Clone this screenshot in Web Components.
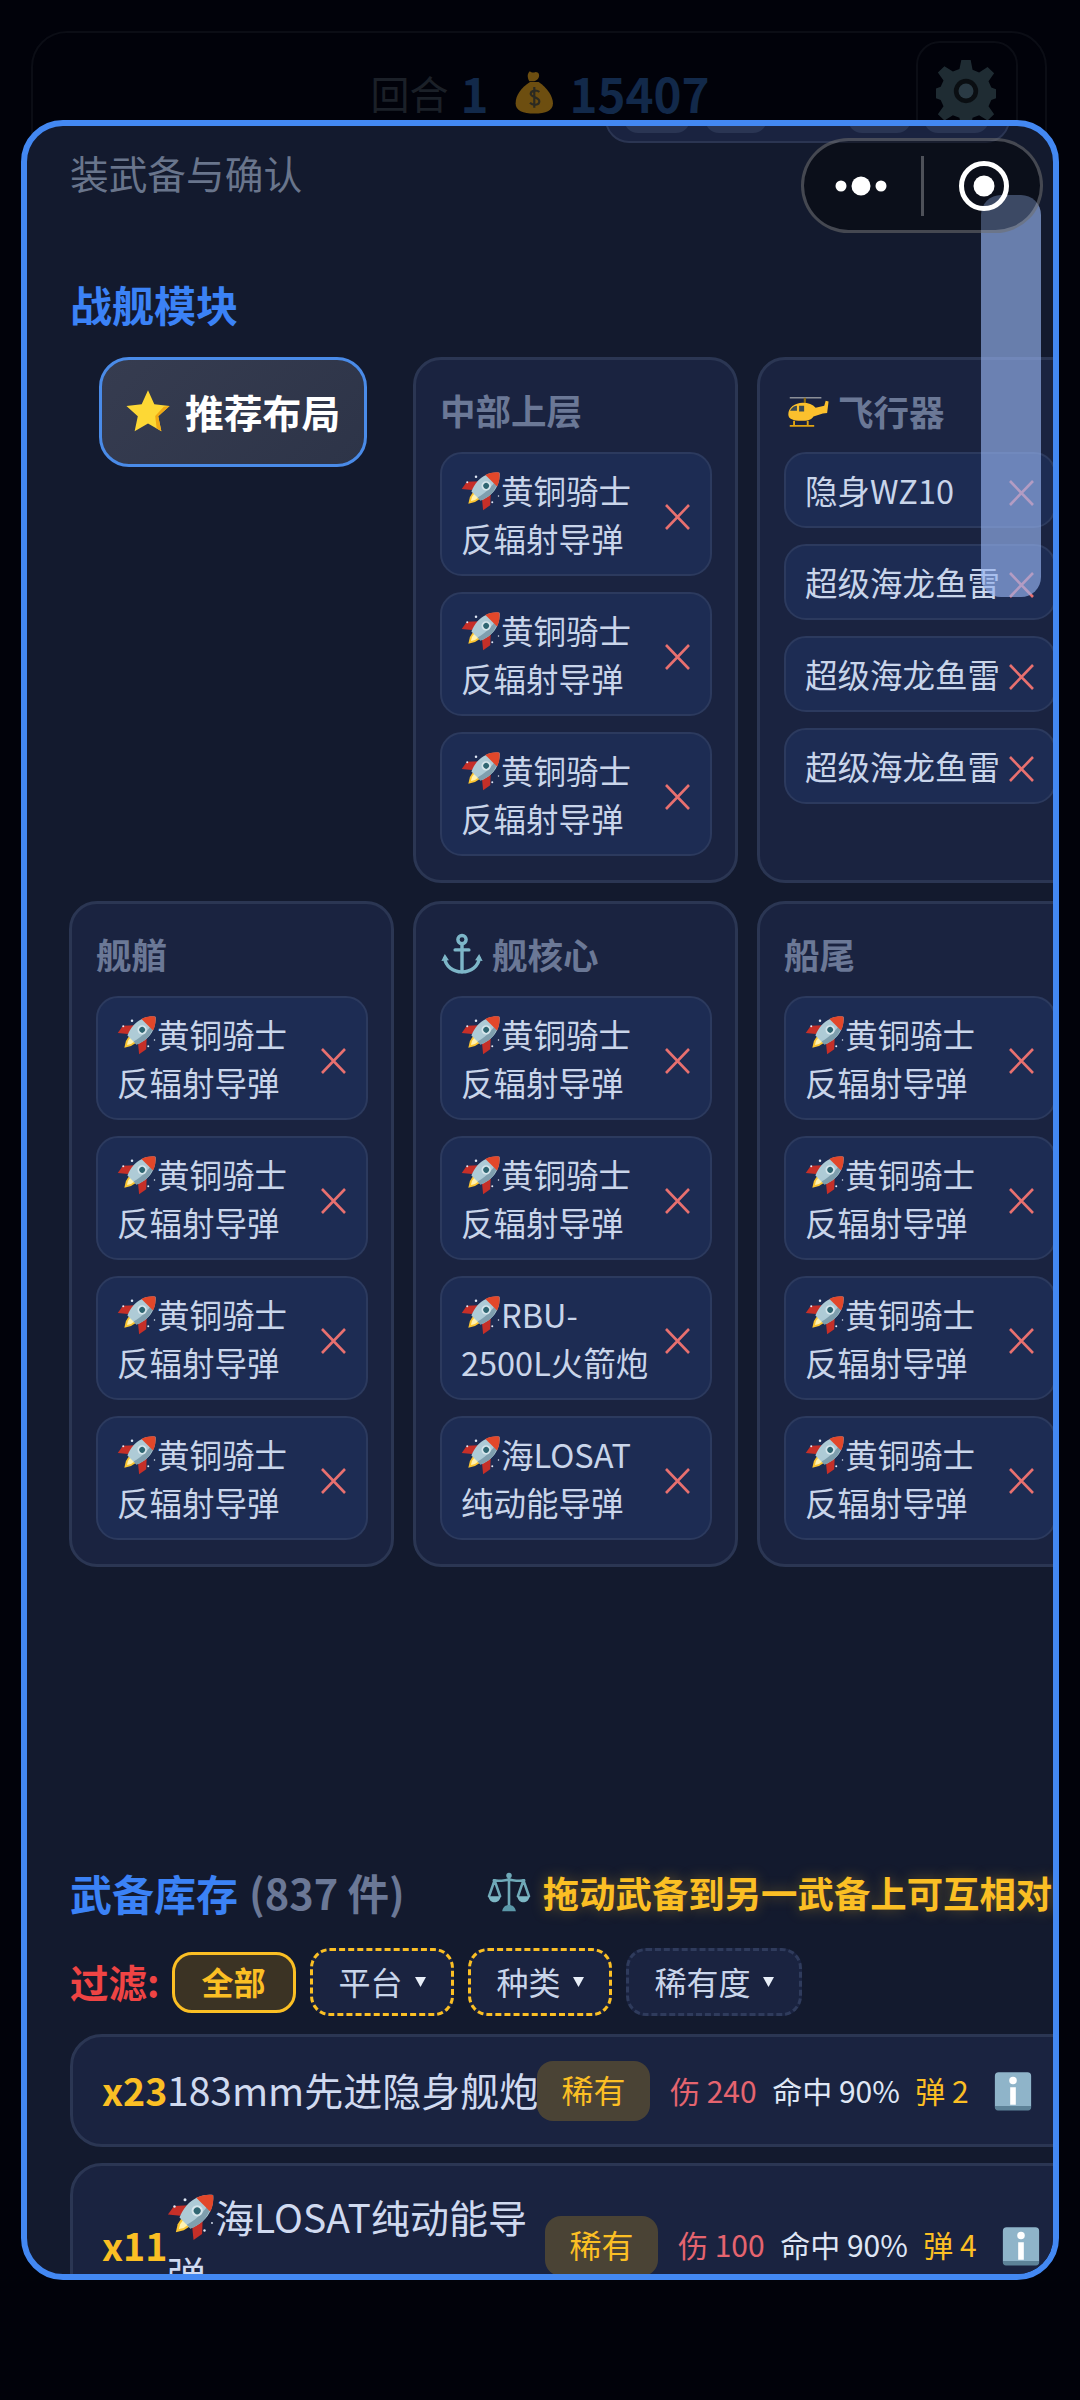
<!DOCTYPE html>
<html lang="zh-CN">
<head>
<meta charset="UTF-8">
<title>装武备与确认</title>
<style>
  html, body { margin: 0; background: #01020a; }
  body {
    width: 1080px; height: 2400px; position: relative; overflow: hidden;
    font-family: "Noto Sans CJK SC", "Noto Sans", sans-serif;
  }
</style>
</head>
<body>
<hud-bar></hud-bar>

<loadout-modal>
  <panel-title>装武备与确认</panel-title>
  <section-head>战舰模块</section-head>

  <module-grid>
    <layout-button><game-icon name="star" size="46" style="margin-right:14px"></game-icon>推荐布局</layout-button>

    <module-col><span slot="head">中部上层</span>
      <weapon-chip><game-icon name="rocket"></game-icon>黄铜骑士反辐射导弹</weapon-chip>
      <weapon-chip><game-icon name="rocket"></game-icon>黄铜骑士反辐射导弹</weapon-chip>
      <weapon-chip><game-icon name="rocket"></game-icon>黄铜骑士反辐射导弹</weapon-chip>
    </module-col>

    <module-col><span slot="head"><game-icon name="heli" size="46"></game-icon> 飞行器</span>
      <weapon-chip>隐身WZ10</weapon-chip>
      <weapon-chip>超级海龙鱼雷</weapon-chip>
      <weapon-chip>超级海龙鱼雷</weapon-chip>
      <weapon-chip>超级海龙鱼雷</weapon-chip>
    </module-col>

    <module-col><span slot="head">舰艏</span>
      <weapon-chip><game-icon name="rocket"></game-icon>黄铜骑士反辐射导弹</weapon-chip>
      <weapon-chip><game-icon name="rocket"></game-icon>黄铜骑士反辐射导弹</weapon-chip>
      <weapon-chip><game-icon name="rocket"></game-icon>黄铜骑士反辐射导弹</weapon-chip>
      <weapon-chip><game-icon name="rocket"></game-icon>黄铜骑士反辐射导弹</weapon-chip>
    </module-col>

    <module-col><span slot="head"><game-icon name="anchor" size="44"></game-icon> 舰核心</span>
      <weapon-chip><game-icon name="rocket"></game-icon>黄铜骑士反辐射导弹</weapon-chip>
      <weapon-chip><game-icon name="rocket"></game-icon>黄铜骑士反辐射导弹</weapon-chip>
      <weapon-chip><game-icon name="rocket"></game-icon>RBU-2500L火箭炮</weapon-chip>
      <weapon-chip><game-icon name="rocket"></game-icon>海LOSAT纯动能导弹</weapon-chip>
    </module-col>

    <module-col><span slot="head">船尾</span>
      <weapon-chip><game-icon name="rocket"></game-icon>黄铜骑士反辐射导弹</weapon-chip>
      <weapon-chip><game-icon name="rocket"></game-icon>黄铜骑士反辐射导弹</weapon-chip>
      <weapon-chip><game-icon name="rocket"></game-icon>黄铜骑士反辐射导弹</weapon-chip>
      <weapon-chip><game-icon name="rocket"></game-icon>黄铜骑士反辐射导弹</weapon-chip>
    </module-col>
  </module-grid>

  <stock-head count="(837 件)">
    <game-icon name="scale" size="44"></game-icon>
    <span>拖动武备到另一武备上可互相对比</span>
  </stock-head>

  <filter-bar>
    <filter-chip kind="active">全部</filter-chip>
    <filter-chip kind="gold" menu>平台</filter-chip>
    <filter-chip kind="gold" menu>种类</filter-chip>
    <filter-chip kind="plain" menu>稀有度</filter-chip>
  </filter-bar>

  <stock-row count="x23" width="370" nowrap dmg="240" ammo="2">183mm先进隐身舰炮</stock-row>
  <stock-row count="x11" width="378" dmg="100" ammo="4"><game-icon name="rocket" size="48"></game-icon>海LOSAT纯动能导弹</stock-row>
</loadout-modal>

<wx-capsule></wx-capsule>

<script>
  const ICONS = {
    rocket: `<g transform="translate(37 27) scale(1.15) rotate(45) translate(-32 -32)">
        <path d="M21 30 9 43l2 12 11-9z" fill="#c62f28"/>
        <path d="M43 30l12 13-2 12-11-9z" fill="#c62f28"/>
        <path d="M25 46h14l-2 9-5 8-5-8z" fill="#fbc531"/>
        <path d="M28 47h8l-1 6-3 5-3-5z" fill="#fff2b0"/>
        <path d="M32 2c9 7 14 19 13 30-.3 6-2 11-4 16H23c-2-5-3.700-10-4-16-1-11 4-23 13-30z" fill="#aecbd6"/>
        <path d="M32 2c2 0 13 16 13 30-.3 6-2 11-4 16h-6c4-14 4-32-3-46z" fill="#7f9fae"/>
        <path d="M32 2c5.500 4 9.500 10 11.500 16h-23C22.500 12 26.500 6 32 2z" fill="#e2472a"/>
        <circle cx="32" cy="28" r="6.500" fill="#d6e6ec"/><circle cx="32" cy="28" r="4" fill="#2f6672"/>
      </g>
      <circle cx="10" cy="18" r="1.600" fill="#dfe8f5"/><circle cx="24" cy="9" r="2" fill="#dfe8f5"/>
      <circle cx="50" cy="50" r="1.600" fill="#dfe8f5"/><circle cx="60" cy="40" r="1.200" fill="#dfe8f5"/>`,
    star: `<path d="M32 3l8.800 19.500 21.200 2.400-15.800 14.300L50.600 60 32 49.400 13.400 60l4.400-20.800L2 24.900l21.200-2.400z" fill="#fdd835"/>
      <path d="M62 24.900 46.200 39.200 50.600 60 44 56l-2-17 12-13z" fill="#f0a814"/>`,
    heli: `<path d="M8 15h44" stroke="#8b8f98" stroke-width="2.200"/>
      <path d="M29 15v8" stroke="#8b6a10" stroke-width="3"/>
      <path d="M6 38c0-9 9-16 20-16 8 0 14 2 18 7l12-3 2-7 4 1-2 16-6 1-13 4c-3 5-9 6-17 6C13 47 6 45 6 38z" fill="#fbc02d"/>
      <path d="M9 32c2-4 6-6 9-6v7H8.500zM21 26h7v8h-7z" fill="#3c4a52"/>
      <path d="M14 47v6M33 47v6M8 54h34" stroke="#e0a412" stroke-width="2.600" fill="none"/>`,
    anchor: `<g fill="none" stroke="#7db6c8" stroke-width="5" stroke-linecap="round">
        <circle cx="32" cy="11" r="6"/><path d="M32 17v41"/><path d="M22 26h20"/>
        <path d="M7 38c1 12 12 20 25 20s24-8 25-20"/></g>
      <path d="M2 42l5-10 6 9zM62 42l-5-10-6 9z" fill="#7db6c8"/>`,
    scale: `<g fill="none" stroke="#6fa9b8" stroke-width="3.800" stroke-linecap="round">
        <path d="M32 8v44"/><path d="M10 15c8 2 14 0 22-1 8 1 14 3 22 1"/>
        <path d="M11 15 3 38M11 15l8 23M53 15l-8 23M53 15l8 23"/></g>
      <circle cx="32" cy="8" r="4" fill="#6fa9b8"/>
      <path d="M2 38h18c-1 6-5 9-9 9s-8-3-9-9zM44 38h18c-1 6-5 9-9 9s-8-3-9-9z" fill="#7db6c4"/>
      <path d="M22 60c1-6 5-9 10-9s9 3 10 9z" fill="#5b97a8"/>`,
    info: `<rect x="3" y="2" width="58" height="60" rx="6" fill="#8fb4c9"/>
      <path d="M3 56h58v2a5 5 0 0 1-5 5H8a5 5 0 0 1-5-5z" fill="#5d8298"/>
      <circle cx="32" cy="15" r="6" fill="#fff"/><rect x="27.500" y="26" width="9" height="28" fill="#fff"/>`,
    bag: `<path d="M24 17c-3-6-3-11 1-14 3 3 5 2 8 1 4 0 6 4 4 8-1 3-4 4-6 5z" fill="#6d4e10"/>
      <path d="M25 18h12c12 8 20 20 20 30 0 10-10 14-26 14S5 58 5 48c0-12 8-22 20-30z" fill="#6d4e10"/>
      <path d="M38 32c-3-3-11-3-12 2s12 5 12 11-9 6-13 2M31 25v29" fill="none" stroke="#2b2a22" stroke-width="3"/>`,
    gear: `<path d="M27 2h10l2 11 7 3 9-6 7 7-6 9 3 7 5 2v10l-5 2-3 7 6 9-7 7-9-6-7 3-2 11H27l-2-11-7-3-9 6-7-7 6-9-3-7-5-2V34l5-2 3-7-6-9 7-7 9 6 7-3z" fill="#1f2c33" transform="translate(0 -3) scale(1 .95)"/>
      <circle cx="32" cy="32" r="13" fill="#0a0e12"/><circle cx="32" cy="32" r="8" fill="#2a3a44"/>`
  };

  class GameIcon extends HTMLElement {
    connectedCallback() {
      const size = this.getAttribute('size') || 40;
      this.attachShadow({ mode: 'open' }).innerHTML = `
        <style>
          :host { display: inline-block; width: ${size}px; height: ${size}px; vertical-align: -0.2em; line-height: 0; }
          svg { display: block; width: 100%; height: 100%; overflow: visible; }
        </style>
        <svg viewBox="0 0 64 64">${ICONS[this.getAttribute('name')]}</svg>`;
    }
  }

  class HudBar extends HTMLElement {
    constructor() {
      super();
      this.attachShadow({ mode: 'open' }).innerHTML = `
        <style>
          :host {
            display: grid; grid-template-columns: 1fr auto 1fr; align-items: start;
            position: absolute; left: 31px; top: 31px; width: 1016px; height: 180px; box-sizing: border-box;
            border: 2px solid #0b0d15; border-radius: 36px; padding: 8px 27px 0 0;
          }
          .stats { grid-column: 2; display: flex; align-items: center; height: 106px; margin: -2px 0 0 29px; white-space: nowrap; }
          .lbl { color: #1b2028; font-size: 39px; margin-right: 12px; }
          .num { color: #12294a; font-size: 47.500px; font-weight: 700; }
          .gear {
            grid-column: 3; justify-self: end; width: 102px; height: 130px; box-sizing: border-box;
            border: 2px solid #0b0d15; border-radius: 24px; padding: 18px 18px;
          }
        </style>
        <div class="stats">
          <span class="lbl">回合</span><span class="num">1</span>
          <game-icon name="bag" size="46" style="margin:0 11px 0 24px"></game-icon><span class="num">15407</span>
        </div>
        <div class="gear"><game-icon name="gear" size="60"></game-icon></div>`;
    }
  }

  class LoadoutModal extends HTMLElement {
    constructor() {
      super();
      this.attachShadow({ mode: 'open' }).innerHTML = `
        <style>
          :host {
            display: block; position: absolute; left: 21px; top: 120px; width: 1038px; height: 2160px;
            box-sizing: border-box; border: 6px solid #4388f2; border-radius: 42px;
            background: #131a2e; overflow: hidden;
          }
          .body { padding: 18px 0 0 43px; width: 1012px; }
          .peek {
            position: absolute; left: 578px; top: -30px; width: 405px; height: 47px; box-sizing: border-box;
            border: 2px solid #2b3552; border-radius: 0 0 24px 24px; background: #1a2340;
          }
          .peek i { position: absolute; bottom: 8px; height: 20px; background: #2a3553; border-radius: 0 0 14px 14px; }
          .thumb {
            position: absolute; left: 954px; top: 69px; width: 60px; height: 402px;
            background: rgba(150, 180, 240, .65); border-radius: 20px;
          }
        </style>
        <div class="peek">
          <i style="left:17px;width:66px"></i><i style="left:98px;width:62px"></i>
          <i style="left:241px;width:63px"></i><i style="left:317px;width:65px"></i>
        </div>
        <div class="body"><slot></slot></div>
        <div class="thumb"></div>`;
    }
  }

  class PanelTitle extends HTMLElement {
    constructor() {
      super();
      this.attachShadow({ mode: 'open' }).innerHTML = `
        <style>:host { display: block; color: #69758c; font-size: 38.700px; line-height: 57px; }</style>
        <slot></slot>`;
    }
  }

  class SectionHead extends HTMLElement {
    constructor() {
      super();
      this.attachShadow({ mode: 'open' }).innerHTML = `
        <style>:host { display: block; color: #3b82f6; font-size: 42px; font-weight: 700; line-height: 60px; margin-top: 73px; }</style>
        <slot></slot>`;
    }
  }

  class ModuleGrid extends HTMLElement {
    constructor() {
      super();
      this.attachShadow({ mode: 'open' }).innerHTML = `
        <style>
          :host {
            display: grid; grid-template-columns: repeat(3, 325px); column-gap: 19px; row-gap: 18px;
            margin: 23px 0 0 -1px; width: 1013px;
          }
        </style>
        <slot></slot>`;
    }
  }

  class LayoutButton extends HTMLElement {
    constructor() {
      super();
      this.attachShadow({ mode: 'open' }).innerHTML = `
        <style>
          :host {
            display: flex; align-items: center; justify-self: start; align-self: start;
            width: 268px; height: 110px; margin-left: 30px; box-sizing: border-box;
            border: 3px solid #4a8be8; border-radius: 30px; padding: 0 0 2px 23px;
            background: linear-gradient(135deg, #363c50, #2d3448);
            color: #fff; font-size: 38.800px; font-weight: 700; white-space: nowrap;
          }
        </style>
        <slot></slot>`;
    }
  }

  class ModuleCol extends HTMLElement {
    constructor() {
      super();
      this.attachShadow({ mode: 'open' }).innerHTML = `
        <style>
          :host {
            display: flex; flex-direction: column; box-sizing: border-box; width: 325px;
            padding: 27px 23px 24px 24px; border: 3px solid #2b3653; border-radius: 28px;
            background: #1a2340;
          }
          .head { height: 50px; line-height: 46px; margin-bottom: 15px; color: #6b7896; font-size: 35.500px; font-weight: 700; white-space: nowrap; }
          .list { display: flex; flex-direction: column; gap: 16px; }
        </style>
        <div class="head"><slot name="head"></slot></div>
        <div class="list"><slot></slot></div>`;
    }
  }

  class WeaponChip extends HTMLElement {
    constructor() {
      super();
      this.attachShadow({ mode: 'open' }).innerHTML = `
        <style>
          :host {
            display: flex; align-items: center; gap: 8px; box-sizing: border-box; width: 272px;
            padding: 12px 21px 12px 19px; border: 2px solid #2c3a5e; border-radius: 22px;
            background: #1d2c53; color: #c9d5ea; font-size: 32.500px; line-height: 48px;
          }
          .name { flex: none; width: 196px; }
          svg { flex: none; width: 25px; height: 26px; margin-top: 6px; }
        </style>
        <div class="name"><slot></slot></div>
        <svg viewBox="0 0 25 26"><path d="M1 1l23 24M24 1 1 25" fill="none" stroke="#e8706f" stroke-width="2.600"/></svg>`;
    }
  }

  class StockHead extends HTMLElement {
    constructor() {
      super();
      this.attachShadow({ mode: 'open' }).innerHTML = `
        <style>
          :host {
            display: flex; align-items: center; margin-top: 295px; height: 60px; width: 1100px;
            font-size: 42px; font-weight: 700; white-space: nowrap;
          }
          .title { color: #3b82f6; }
          .count { color: #6b7896; margin-left: 11px; font-size: 41.500px; }
          .hint {
            display: flex; align-items: center; gap: 12px; margin-left: 82px;
            color: #fbbf24; font-size: 36.400px; text-shadow: 0 0 14px rgba(251, 191, 36, .35);
          }
        </style>
        <span class="title">武备库存</span><span class="count">${this.getAttribute('count')}</span>
        <span class="hint"><slot></slot></span>`;
    }
  }

  class FilterBar extends HTMLElement {
    constructor() {
      super();
      this.attachShadow({ mode: 'open' }).innerHTML = `
        <style>
          :host { display: flex; align-items: center; gap: 14px; margin-top: 26px; height: 68px; margin-bottom: 18px; }
          .lbl { color: #ef4444; font-size: 38.500px; font-weight: 700; white-space: nowrap; margin: -3px -2px 0 0; }
        </style>
        <span class="lbl">过滤:</span>
        <slot></slot>`;
    }
  }

  class FilterChip extends HTMLElement {
    constructor() {
      super();
      const menu = this.hasAttribute('menu');
      this.attachShadow({ mode: 'open' }).innerHTML = `
        <style>
          :host {
            display: flex; align-items: center; box-sizing: border-box; height: 68px; padding: 0 25px 3px 26px;
            border: 3px dashed #fbbf24; border-radius: 20px; background: #1a2340;
            color: #c9d5ea; font-size: 32px; white-space: nowrap;
          }
          :host([kind="plain"]) { border-color: #2f3b5c; }
          :host([kind="active"]) {
            height: 61px; width: 124px; justify-content: center; padding: 0 0 3px; border-style: solid; background: #3b3324;
            color: #fbbf24; font-weight: 700;
          }
          svg { width: 11px; height: 10px; margin: 3px 0 0 12px; }
        </style>
        <slot></slot>
        ${menu ? '<svg viewBox="0 0 11 10"><path d="M0 0h11L5.500 10z" fill="#e8eef8"/></svg>' : ''}`;
    }
  }

  class StockRow extends HTMLElement {
    constructor() {
      super();
      const a = n => this.getAttribute(n);
      this.attachShadow({ mode: 'open' }).innerHTML = `
        <style>
          :host {
            display: flex; align-items: center; box-sizing: border-box; width: 1040px; margin-bottom: 16px;
            padding: 24px 0 24px 29px; border: 3px solid #2b3653; border-radius: 32px;
            background: #1a2340; color: #d0daf0;
          }
          :host([nowrap]) { padding-top: 23.500px; padding-bottom: 23.500px; }
          .count { flex: none; width: 65px; margin-top: -4px; color: #fbbf24; font-size: 37.500px; font-weight: 700; line-height: 57px; }
          .name { flex: none; width: ${a('width')}px; margin-top: -2px; font-size: 39px; line-height: 57px; }
          :host([nowrap]) .name { white-space: nowrap; }
          :host([nowrap]) .count, :host([nowrap]) .dmg, :host([nowrap]) .hit, :host([nowrap]) .ammo { margin-top: -2px; }
          .badge {
            flex: none; width: 113px; height: 60px; line-height: 56px; text-align: center; border-radius: 16px;
            background: #4a4335; color: #fbbf24; font-size: 32px;
          }
          .stats { flex: none; display: flex; align-items: center; gap: 15.500px; margin-left: 20px; font-size: 30px; white-space: nowrap; }
          .dmg, .hit, .ammo { margin-top: -4px; }
          .dmg { color: #e5646f; } .hit { color: #dfe6f5; } .ammo { color: #fbbf24; }
          game-icon { margin-left: 9px; }
        </style>
        <span class="count">${a('count')}</span>
        <div class="name"><slot></slot></div>
        <span class="badge">稀有</span>
        <div class="stats">
          <span class="dmg">伤 ${a('dmg')}</span><span class="hit">命中 90%</span><span class="ammo">弹 ${a('ammo')}</span>
          <game-icon name="info" size="40"></game-icon>
        </div>`;
    }
  }

  class WxCapsule extends HTMLElement {
    constructor() {
      super();
      this.attachShadow({ mode: 'open' }).innerHTML = `
        <style>
          :host {
            display: flex; align-items: center; position: absolute; left: 801px; top: 138px;
            width: 242px; height: 95px; box-sizing: border-box;
            border: 3px solid rgba(255, 255, 255, .24); border-radius: 48px; background: rgba(0, 0, 0, .42);
          }
          svg { display: block; width: 236px; height: 89px; }
        </style>
        <svg viewBox="0 0 236 89">
          <circle cx="37" cy="45" r="5.500" fill="#fff"/><circle cx="57" cy="45" r="9.500" fill="#fff"/><circle cx="77" cy="45" r="5.500" fill="#fff"/>
          <rect x="117" y="15" width="3" height="60" fill="rgba(255,255,255,.28)"/>
          <circle cx="180" cy="45" r="22.500" fill="none" stroke="#fff" stroke-width="5"/><circle cx="180" cy="45" r="10.500" fill="#fff"/>
        </svg>`;
    }
  }

  customElements.define('game-icon', GameIcon);
  customElements.define('hud-bar', HudBar);
  customElements.define('loadout-modal', LoadoutModal);
  customElements.define('panel-title', PanelTitle);
  customElements.define('section-head', SectionHead);
  customElements.define('module-grid', ModuleGrid);
  customElements.define('layout-button', LayoutButton);
  customElements.define('module-col', ModuleCol);
  customElements.define('weapon-chip', WeaponChip);
  customElements.define('stock-head', StockHead);
  customElements.define('filter-bar', FilterBar);
  customElements.define('filter-chip', FilterChip);
  customElements.define('stock-row', StockRow);
  customElements.define('wx-capsule', WxCapsule);
</script>
</body>
</html>
